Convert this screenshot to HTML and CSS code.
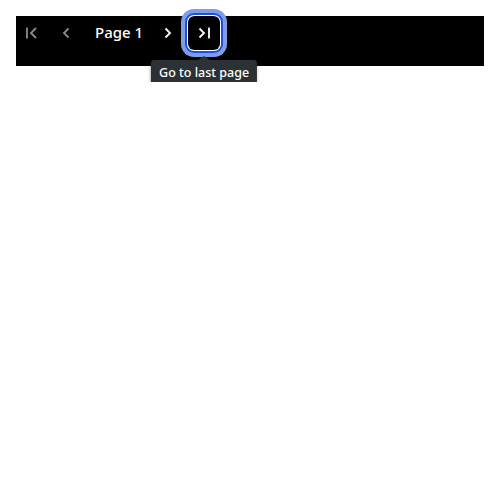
FILE: index.html
```html
<!DOCTYPE html>
<html>
<head>
<meta charset="utf-8">
<link rel="stylesheet" href="styles.css">
</head>
<body>
<div class="bar">
  <button class="nav disabled" aria-label="Go to first page">
    <svg width="14" height="14" viewBox="0 0 14 14"><path d="M2 1.5v11M11 2L6 7l5 5" fill="none" stroke="currentColor" stroke-width="1.8"/></svg>
  </button>
  <button class="nav disabled" aria-label="Go to previous page">
    <svg width="14" height="14" viewBox="0 0 14 14"><path d="M9.5 2.5L5 7l4.5 4.5" fill="none" stroke="currentColor" stroke-width="1.8"/></svg>
  </button>
  <span class="page">Page 1</span>
  <button class="nav" aria-label="Go to next page">
    <svg width="14" height="14" viewBox="0 0 14 14"><path d="M4.5 2.5L9 7l-4.5 4.5" fill="none" stroke="currentColor" stroke-width="1.8"/></svg>
  </button>
  <div class="last-wrap">
    <button class="nav focused" aria-label="Go to last page">
      <svg width="14" height="14" viewBox="0 0 14 14"><path d="M2.5 2.5L7 7l-4.5 4.5M12 1.5v11" fill="none" stroke="currentColor" stroke-width="1.8"/></svg>
    </button>
    <div class="tooltip">Go to last page</div>
  </div>
</div>
</body>
</html>
```

FILE: styles.css
```css
html, body {
  margin: 0;
  padding: 0;
  background: #fff;
}
body {
  padding: 16px;
  font-family: "Noto Sans", "Open Sans", sans-serif;
}
.bar {
  display: flex;
  align-items: flex-start;
  height: 50px;
  background: #000;
}
.nav {
  width: 32px;
  height: 34px;
  padding: 0;
  border: 0;
  background: transparent;
  color: #fff;
  display: flex;
  align-items: center;
  justify-content: center;
  border-radius: 6px;
}
.nav + .nav {
  margin-left: 2px;
}
.disabled {
  color: #8c8c8c;
}
.page {
  height: 34px;
  line-height: 33px;
  color: #fff;
  font-size: 15px;
  font-weight: 500;
  margin: 0 9px 0 13px;
}
.last-wrap {
  position: relative;
  margin-left: 4px;
}
.focused {
  box-shadow: 0 0 0 1px #fff, 0 0 0 3px #1d50dc, 0 0 0 7px #7e9de6;
}
.tooltip {
  position: absolute;
  top: 44px;
  left: 50%;
  transform: translateX(-50%);
  white-space: nowrap;
  background: #2c3136;
  color: #fff;
  font-size: 12.5px;
  font-weight: 500;
  line-height: 25px;
  height: 25px;
  padding: 0 8px;
  border-radius: 3px;
  box-shadow: 0 1px 3px rgba(0,0,0,0.25);
}
.tooltip::before {
  content: "";
  position: absolute;
  top: -4px;
  left: 50%;
  margin-left: -6px;
  border-left: 6px solid transparent;
  border-right: 6px solid transparent;
  border-bottom: 4px solid #2c3136;
}
```
